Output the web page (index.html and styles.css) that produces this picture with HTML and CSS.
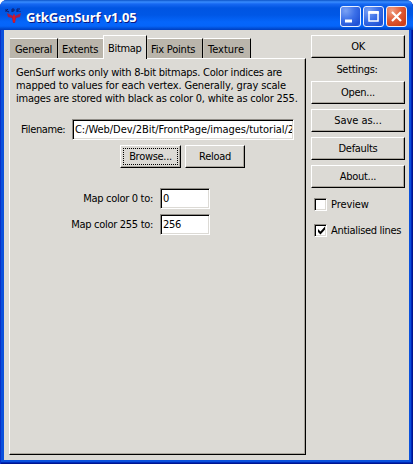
FILE: index.html
```html
<!DOCTYPE html>
<html lang="en">
<head>
<meta charset="utf-8">
<title>GtkGenSurf v1.05</title>
<link rel="stylesheet" href="styles.css">
</head>
<body>
<div class="window">
  <header class="titlebar">
    <svg class="logo" width="18" height="16" viewBox="0 0 18 16">
      <path d="M1 1v3M1 3l2-2M2 3l2 1M7 1v3M7 1h2v2H7M12 4V1h3M12 3h2M15 3v1" stroke="#101c68" stroke-width="1" fill="none"/>
      <path d="M2 5l4 2 2 1 1-3 1 3 2-1 4-2-1 4-4 1-1 5H8l-1-5-4-1z" fill="#a51d49"/>
      <path d="M8 7h2v7H8z" fill="#d51828"/>
    </svg>
    <h1 class="title">GtkGenSurf v1.05</h1>
    <div class="controls">
      <span class="control"><svg width="19" height="19"><path d="M4 12.5h7v3H4z" fill="#fff"/></svg></span>
      <span class="control"><svg width="19" height="19"><path d="M5 5.500h9v8.500H5z" fill="none" stroke="#fff" stroke-width="1.5"/><path d="M4.300 4h10.500v2.800H4.300z" fill="#fff"/></svg></span>
      <span class="control close"><svg width="19" height="19"><path d="M5 5l9 9M14 5l-9 9" stroke="#fff" stroke-width="2.2"/></svg></span>
    </div>
  </header>
  <main class="content">
    <section class="notebook">
      <nav class="tabs">
        <span class="tab general">General</span>
        <span class="tab extents">Extents</span>
        <span class="tab bitmap active">Bitmap</span>
        <span class="tab fix">Fix Points</span>
        <span class="tab texture">Texture</span>
      </nav>
      <div class="page">
        <p class="info"><span class="line1">GenSurf works only with 8-bit bitmaps. Color indices are</span><br><span class="line2">mapped to values for each vertex. Generally, gray scale</span><br><span class="line3">images are stored with black as color 0, white as color 255.</span></p>
        <div class="file-row">
          <span class="label filename">Filename:</span>
          <div class="entry"><span class="path">C:/Web/Dev/2Bit/FrontPage/images/tutorial/2</span></div>
        </div>
        <div class="file-buttons">
          <div class="button browse"><span class="focus">Browse...</span></div>
          <div class="button reload">Reload</div>
        </div>
        <div class="fields">
          <span class="label map0">Map color 0 to:</span><div class="entry">0</div>
          <span class="label map255">Map color 255 to:</span><div class="entry">256</div>
        </div>
      </div>
    </section>
    <aside class="side">
      <div class="button ok">OK</div>
      <div class="settings"><span>Settings:</span></div>
      <div class="stack">
        <div class="button open">Open...</div>
        <div class="button save">Save as...</div>
        <div class="button defaults">Defaults</div>
        <div class="button about">About...</div>
      </div>
      <div class="check"><span class="box"></span><span class="preview">Preview</span></div>
      <div class="check"><span class="box"><svg width="9" height="9"><path d="M1 3v3l2.500 2.500L8 3.500V.500L3.500 5.500z" fill="#000"/></svg></span><span class="anti">Antialised lines</span></div>
    </aside>
  </main>
</div>
</body>
</html>
```
FILE: styles.css
```css
* { box-sizing: border-box; }
body {
  margin: 0;
  background: #fff;
  font: 11px/13px "DejaVu Sans Condensed", "DejaVu Sans", sans-serif;
  font-stretch: condensed;
  letter-spacing: -0.3px;
  color: #000;
  white-space: nowrap;
  overflow: hidden;
}
.window {
  width: 413px;
  height: 464px;
  padding: 0 4px 4px;
  border-radius: 7px 7px 0 0;
  background: #0a50dc;
  box-shadow: inset 1px 0 #0830c8, inset -1px -1px #001590, inset -2px -2px #0029b8;
}
.titlebar {
  display: flex;
  align-items: center;
  height: 30px;
  margin: 0 -4px;
  padding: 2px 6px 0 5px;
  border-radius: 7px 7px 0 0;
  background: linear-gradient(#0c54c8 0, #388cff 2px, #1668f2 4px, #0055e2 8px, #0057e6 15px, #0566fb 22px, #0565fa 26px, #0048cc 29px, #003dc0 30px);
}
.logo { flex: none; }
.title {
  flex: 1;
  margin: 1px 0 0 3px;
  font: bold 13px/18px "Open Sans", "Noto Sans", sans-serif;
  letter-spacing: -0.1px;
  color: #fff;
  text-shadow: 1px 1px #0a1883;
}
.controls { display: flex; gap: 2px; }
.control {
  width: 21px;
  height: 21px;
  border: 1px solid #e9f0ff;
  border-radius: 3px;
  background: radial-gradient(circle at 25% 20%, #7ba2f4, #3c70e8 45%, #1f50d4 85%, #3976f0);
}
.control svg { display: block; }
.close { background: radial-gradient(circle at 25% 20%, #f0a084, #e05c38 45%, #cd3e16 85%, #e05c30); }
.content {
  display: flex;
  height: 430px;
  background: #dcdad5;
}
.notebook { width: 297px; margin: 5px 0 0 5px; }
.tabs { display: flex; align-items: flex-end; height: 23px; padding-left: 1px; }
.tab {
  height: 20px;
  padding: 4px 0 0 4px;
  border-top: 1px solid #fff;
  border-right: 1px solid #000;
  background: #bab5ab;
}
.tab + .tab { border-left: 1px solid #c8c4ba; }
.tab.active {
  position: relative;
  height: 24px;
  margin-bottom: -1px;
  padding-top: 6px;
  border-left: 1px solid #fff;
  background: #dcdad5;
}
.general { width: 48px; padding-left: 5px; }
.extents { width: 45px; padding-left: 3px; border-right: 0; letter-spacing: -0.15px; }
.bitmap { width: 44px; }
.fix { width: 56px; padding-left: 3px; letter-spacing: -0.2px; }
.texture { width: 48px; letter-spacing: 0; }
.page {
  height: 397px;
  padding: 7px 0 0 6px;
  border: 1px solid #fff;
  border-right-color: #000;
  border-bottom-color: #000;
  box-shadow: inset -1px -1px #aaa69e;
}
.info { margin: 0 0 14px; }
.line1 { letter-spacing: -0.23px; }
.line2 { letter-spacing: -0.16px; }
.line3 { letter-spacing: -0.22px; }
.file-row { display: flex; align-items: center; height: 21px; }
.filename { width: 51px; margin-left: 5px; letter-spacing: -0.4px; }
.file-row .entry { width: 222px; }
.entry {
  height: 21px;
  padding: 3px 0 0 2px;
  overflow: hidden;
  background: #fff;
  border: 1px solid #908d87;
  border-right-color: #fff;
  border-bottom-color: #fff;
  box-shadow: inset 1px 1px #000, inset -1px -1px #dcdad5;
}
.path { display: block; width: 217px; padding-left: 0; overflow: hidden; letter-spacing: -0.05px; }
.file-buttons { display: flex; gap: 4px; margin: 5px 0 0 104px; }
.button {
  display: flex;
  align-items: center;
  justify-content: center;
  height: 23px;
  border: 1px solid #fff;
  border-right-color: #000;
  border-bottom-color: #000;
  box-shadow: inset -1px -1px #aaa69e;
}
.browse { width: 61px; }
.reload { width: 60px; }
.focus { width: 55px; height: 17px; border: 1px dotted #000; line-height: 15px; text-align: center; }
.fields {
  display: grid;
  grid-template-columns: 137px 50px;
  row-gap: 5px;
  column-gap: 7px;
  align-items: center;
  margin-top: 20px;
}
.fields .label { text-align: right; }
.side { width: 94px; margin: 5px 0 0 5px; }
.settings { padding: 5px 2px 5px 0; text-align: center; }
.save { letter-spacing: -0.05px; }
.stack { display: grid; gap: 5px; margin-bottom: 10px; }
.check { display: flex; align-items: center; height: 13px; margin: 0 0 13px 3px; gap: 4px; }
.preview { letter-spacing: -0.1px; }
.box {
  flex: none;
  width: 13px;
  height: 13px;
  padding: 1px;
  background: #fff;
  border: 1px solid #908d87;
  border-right-color: #fff;
  border-bottom-color: #fff;
  box-shadow: inset 1px 1px #000, inset -1px -1px #dcdad5;
}
.box svg { display: block; margin: 0 1px; }
```
